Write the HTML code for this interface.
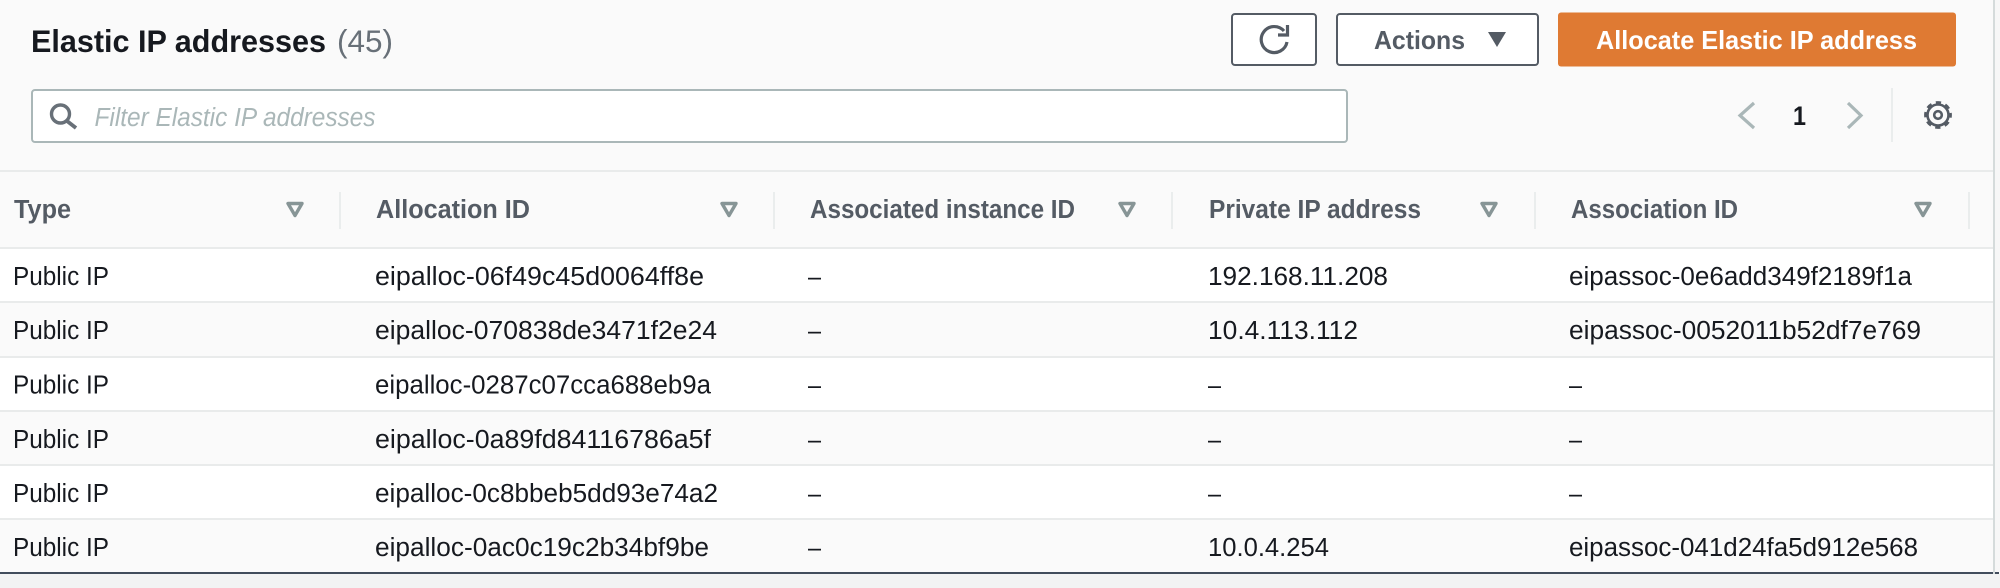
<!DOCTYPE html>
<html><head><meta charset="utf-8"><style>
html,body{margin:0;padding:0;width:2000px;height:588px;overflow:hidden;background:#fafafa}
svg{display:block}
text{font-family:"Liberation Sans",sans-serif}
.c{font-size:25.5px;fill:#16191f}
.h{font-size:25.5px;font-weight:bold;fill:#545b64}
.f{fill:none;stroke:#879596;stroke-width:3.4;stroke-linejoin:round}
</style></head><body>
<svg width="2000" height="588" viewBox="0 0 2000 588" xmlns="http://www.w3.org/2000/svg">
<rect width="2000" height="588" fill="#fafafa"/>
<!-- rows -->
<rect x="0" y="248" width="1993" height="54" fill="#fff"/>
<rect x="0" y="357" width="1993" height="54" fill="#fff"/>
<rect x="0" y="465" width="1993" height="54" fill="#fff"/>
<g fill="#e9ebeb">
<rect x="0" y="170" width="1993" height="2"/>
<rect x="0" y="247" width="1993" height="2"/>
<rect x="0" y="301" width="1993" height="2"/>
<rect x="0" y="356" width="1993" height="2"/>
<rect x="0" y="410" width="1993" height="2"/>
<rect x="0" y="464" width="1993" height="2"/>
<rect x="0" y="518" width="1993" height="2"/>
</g>
<rect x="0" y="574" width="2000" height="14" fill="#f2f3f3"/>
<rect x="0" y="572" width="1999" height="2" fill="#414d5c"/>
<rect x="1993" y="0" width="2" height="574" fill="#d5dbdb"/>
<rect x="1995" y="0" width="5" height="572" fill="#f7f7f7"/>

<!-- title -->
<text x="31" y="52" font-size="31.500" font-weight="bold" fill="#16191f" textLength="295" lengthAdjust="spacingAndGlyphs">Elastic IP addresses</text>
<text x="337" y="52" font-size="31.500" fill="#687078" textLength="56" lengthAdjust="spacingAndGlyphs">(45)</text>

<!-- buttons -->
<rect x="1232" y="14" width="84" height="51" rx="3" fill="#fff" stroke="#545b64" stroke-width="2"/>
<path d="M1284 31A13 13 0 1 0 1287 42" fill="none" stroke="#545b64" stroke-width="3.2"/>
<path d="M1287.500 25V35H1278" fill="none" stroke="#545b64" stroke-width="3.2"/>
<rect x="1337" y="14" width="201" height="51" rx="3" fill="#fff" stroke="#545b64" stroke-width="2"/>
<text x="1374" y="49" font-size="26" font-weight="bold" fill="#545b64" textLength="91" lengthAdjust="spacingAndGlyphs">Actions</text>
<path d="M1488 32H1506L1497 47Z" fill="#545b64"/>
<rect x="1558" y="12.500" width="398" height="54" rx="3" fill="#df7a33"/>
<text x="1596" y="49" font-size="26" font-weight="bold" fill="#fff" textLength="321" lengthAdjust="spacingAndGlyphs">Allocate Elastic IP address</text>

<!-- search -->
<rect x="32" y="90" width="1315" height="52" rx="3" fill="#fff" stroke="#aab7b8" stroke-width="2"/>
<circle cx="60.500" cy="114" r="9" fill="none" stroke="#687078" stroke-width="3.400"/>
<path d="M67 121L76 128" fill="none" stroke="#687078" stroke-width="3.800"/>
<text x="94.500" y="126" font-size="25.500" font-style="italic" fill="#aab7b8" textLength="281" lengthAdjust="spacingAndGlyphs">Filter Elastic IP addresses</text>

<!-- pagination -->
<path d="M1754 103L1740 115.500L1754 128" fill="none" stroke="#aab7b8" stroke-width="3.200"/>
<text x="1793" y="125" font-size="27" font-weight="bold" fill="#16191f" textLength="13" lengthAdjust="spacingAndGlyphs">1</text>
<path d="M1848 103L1861 115.500L1848 128" fill="none" stroke="#aab7b8" stroke-width="3.200"/>
<rect x="1891" y="88" width="2" height="54" fill="#eaeded"/>
<circle cx="1938" cy="115" r="10.500" fill="none" stroke="#545b64" stroke-width="2.600"/>
<circle cx="1938" cy="115" r="12.500" fill="none" stroke="#545b64" stroke-width="2.800" stroke-dasharray="5.300 4.520" stroke-dashoffset="2.600"/>
<circle cx="1938" cy="115" r="3.800" fill="none" stroke="#545b64" stroke-width="2.600"/>

<!-- header separators -->
<g fill="#eaeded">
<rect x="339" y="192" width="2" height="37"/>
<rect x="773" y="192" width="2" height="37"/>
<rect x="1171" y="192" width="2" height="37"/>
<rect x="1534" y="192" width="2" height="37"/>
<rect x="1968" y="192" width="2" height="37"/>
</g>

<!-- headers -->
<text class="h" x="14" y="218" textLength="57" lengthAdjust="spacingAndGlyphs">Type</text>
<text class="h" x="376" y="218" textLength="154" lengthAdjust="spacingAndGlyphs">Allocation ID</text>
<text class="h" x="810" y="218" textLength="265" lengthAdjust="spacingAndGlyphs">Associated instance ID</text>
<text class="h" x="1209" y="218" textLength="212" lengthAdjust="spacingAndGlyphs">Private IP address</text>
<text class="h" x="1571" y="218" textLength="167" lengthAdjust="spacingAndGlyphs">Association ID</text>
<path class="f" d="M288 203.500H302L295 215.500Z"/>
<path class="f" d="M722 203.500H736L729 215.500Z"/>
<path class="f" d="M1120 203.500H1134L1127 215.500Z"/>
<path class="f" d="M1482 203.500H1496L1489 215.500Z"/>
<path class="f" d="M1916 203.500H1930L1923 215.500Z"/>

<!-- column 1 -->
<text class="c" x="13" y="285" textLength="96" lengthAdjust="spacingAndGlyphs">Public IP</text>
<text class="c" x="13" y="339" textLength="96" lengthAdjust="spacingAndGlyphs">Public IP</text>
<text class="c" x="13" y="393.500" textLength="96" lengthAdjust="spacingAndGlyphs">Public IP</text>
<text class="c" x="13" y="448" textLength="96" lengthAdjust="spacingAndGlyphs">Public IP</text>
<text class="c" x="13" y="502" textLength="96" lengthAdjust="spacingAndGlyphs">Public IP</text>
<text class="c" x="13" y="556" textLength="96" lengthAdjust="spacingAndGlyphs">Public IP</text>

<!-- column 2 -->
<text class="c" x="375" y="285" textLength="329" lengthAdjust="spacingAndGlyphs">eipalloc-06f49c45d0064ff8e</text>
<text class="c" x="375" y="339" textLength="342" lengthAdjust="spacingAndGlyphs">eipalloc-070838de3471f2e24</text>
<text class="c" x="375" y="393.500" textLength="336" lengthAdjust="spacingAndGlyphs">eipalloc-0287c07cca688eb9a</text>
<text class="c" x="375" y="448" textLength="336" lengthAdjust="spacingAndGlyphs">eipalloc-0a89fd84116786a5f</text>
<text class="c" x="375" y="502" textLength="343" lengthAdjust="spacingAndGlyphs">eipalloc-0c8bbeb5dd93e74a2</text>
<text class="c" x="375" y="556" textLength="334" lengthAdjust="spacingAndGlyphs">eipalloc-0ac0c19c2b34bf9be</text>

<!-- column 3 -->
<text class="c" x="808" y="285" textLength="13" lengthAdjust="spacingAndGlyphs">–</text>
<text class="c" x="808" y="339" textLength="13" lengthAdjust="spacingAndGlyphs">–</text>
<text class="c" x="808" y="393.500" textLength="13" lengthAdjust="spacingAndGlyphs">–</text>
<text class="c" x="808" y="448" textLength="13" lengthAdjust="spacingAndGlyphs">–</text>
<text class="c" x="808" y="502" textLength="13" lengthAdjust="spacingAndGlyphs">–</text>
<text class="c" x="808" y="556" textLength="13" lengthAdjust="spacingAndGlyphs">–</text>

<!-- column 4 -->
<text class="c" x="1208" y="285" textLength="180" lengthAdjust="spacingAndGlyphs">192.168.11.208</text>
<text class="c" x="1208" y="339" textLength="150" lengthAdjust="spacingAndGlyphs">10.4.113.112</text>
<text class="c" x="1208" y="393.500" textLength="13" lengthAdjust="spacingAndGlyphs">–</text>
<text class="c" x="1208" y="448" textLength="13" lengthAdjust="spacingAndGlyphs">–</text>
<text class="c" x="1208" y="502" textLength="13" lengthAdjust="spacingAndGlyphs">–</text>
<text class="c" x="1208" y="556" textLength="121" lengthAdjust="spacingAndGlyphs">10.0.4.254</text>

<!-- column 5 -->
<text class="c" x="1569" y="285" textLength="343" lengthAdjust="spacingAndGlyphs">eipassoc-0e6add349f2189f1a</text>
<text class="c" x="1569" y="339" textLength="352" lengthAdjust="spacingAndGlyphs">eipassoc-0052011b52df7e769</text>
<text class="c" x="1569" y="393.500" textLength="13" lengthAdjust="spacingAndGlyphs">–</text>
<text class="c" x="1569" y="448" textLength="13" lengthAdjust="spacingAndGlyphs">–</text>
<text class="c" x="1569" y="502" textLength="13" lengthAdjust="spacingAndGlyphs">–</text>
<text class="c" x="1569" y="556" textLength="349" lengthAdjust="spacingAndGlyphs">eipassoc-041d24fa5d912e568</text>
</svg>
</body></html>
